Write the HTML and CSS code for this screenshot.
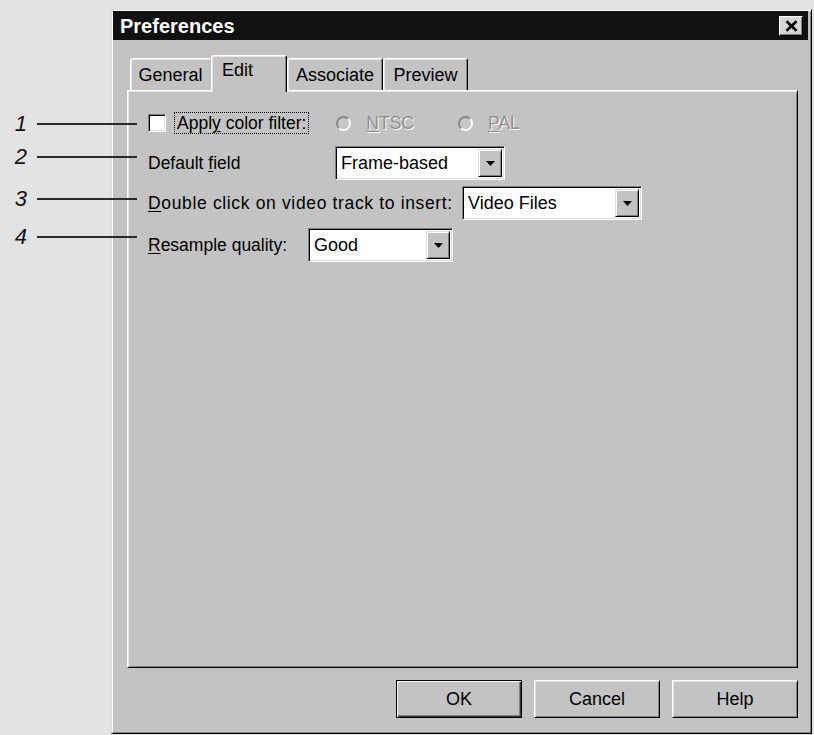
FILE: index.html
```html
<!DOCTYPE html>
<html>
<head>
<meta charset="utf-8">
<title>Preferences</title>
<link rel="stylesheet" href="styles.css">
</head>
<body>
<div class="dialog">
  <div class="titlebar">
    <span class="title">Preferences</span>
    <span class="close"><svg width="13" height="12" viewBox="0 0 13 12"><path d="M1.5 1.2 L11.5 10.8 M11.5 1.2 L1.5 10.8" stroke="#000" stroke-width="2.6" fill="none"/></svg></span>
  </div>
  <div class="body">
    <div class="tabs">
      <div class="tab t-general">General</div>
      <div class="tab t-edit active">Edit</div>
      <div class="tab t-assoc">Associate</div>
      <div class="tab t-preview">Preview</div>
    </div>
    <div class="panel">
      <div class="row r1">
        <span class="checkbox"></span>
        <span class="focus">Appl<u>y</u> color filter:</span>
        <span class="radio r-ntsc"></span><span class="disabled"><u>N</u>TSC</span>
        <span class="radio r-pal"></span><span class="disabled"><u>P</u>AL</span>
      </div>
      <div class="row r2">
        <span class="label l2">Default <u>f</u>ield</span>
        <div class="combo c2"><span class="combo-text">Frame-based</span><span class="combo-btn"><svg width="9" height="5" viewBox="0 0 9 5"><path d="M0 0 H9 L4.5 5 Z" fill="#000"/></svg></span></div>
      </div>
      <div class="row r3">
        <span class="label l3"><u>D</u>ouble click on video track to insert:</span>
        <div class="combo c3"><span class="combo-text">Video Files</span><span class="combo-btn"><svg width="9" height="5" viewBox="0 0 9 5"><path d="M0 0 H9 L4.5 5 Z" fill="#000"/></svg></span></div>
      </div>
      <div class="row r4">
        <span class="label l4"><u>R</u>esample quality:</span>
        <div class="combo c4"><span class="combo-text">Good</span><span class="combo-btn"><svg width="9" height="5" viewBox="0 0 9 5"><path d="M0 0 H9 L4.5 5 Z" fill="#000"/></svg></span></div>
      </div>
    </div>
    <div class="buttons">
      <div class="btn default">OK</div>
      <div class="btn">Cancel</div>
      <div class="btn">Help</div>
    </div>
  </div>
</div>
<div class="callout k1"><span class="num">1</span><span class="line"></span></div>
<div class="callout k2"><span class="num">2</span><span class="line"></span></div>
<div class="callout k3"><span class="num">3</span><span class="line"></span></div>
<div class="callout k4"><span class="num">4</span><span class="line"></span></div>
</body>
</html>
```
FILE: styles.css
```css
* { box-sizing: border-box; }
html, body { margin: 0; padding: 0; }
body {
  width: 814px;
  height: 735px;
  overflow: hidden;
  position: relative;
  background: #e3e3e3;
  font-family: "Liberation Sans", Arial, sans-serif;
  color: #000;
  padding: 9px 0 0 111px;
}
.dialog {
  width: 701px;
  height: 725px;
  background: #c3c3c3;
  border: 1px solid;
  border-color: #dcdcdc #000 #000 #dcdcdc;
  box-shadow: inset 1px 1px 0 #fff, inset -1px -1px 0 #808080;
  padding: 1px;
  display: flex;
  flex-direction: column;
}
.titlebar {
  height: 29px;
  margin-right: 2px;
  background: #111;
  display: flex;
  align-items: center;
  justify-content: space-between;
  padding: 0 5px 0 7px;
}
.title {
  color: #fff;
  font-weight: bold;
  font-size: 20px;
  line-height: 24px;
}
.close {
  width: 24px;
  height: 20px;
  background: #d6d6d6;
  border: 1px solid;
  border-color: #fff #000 #000 #fff;
  box-shadow: inset -1px -1px 0 #808080;
  display: flex;
  align-items: center;
  justify-content: center;
}
.body {
  flex: 1;
  padding: 15px 12px 0 14px;
  display: flex;
  flex-direction: column;
}
.tabs {
  display: flex;
  align-items: flex-end;
  height: 37px;
  padding-left: 3px;
  margin-bottom: -2px;
  position: relative;
  z-index: 1;
}
.tab {
  height: 32px;
  margin-bottom: 2px;
  background: #c3c3c3;
  border: 1px solid;
  border-bottom: none;
  border-color: #fff #000 transparent #fff;
  border-radius: 3px 3px 0 0;
  box-shadow: inset 1px 1px 0 #e6e6e6, inset -1px 0 0 #808080;
  font-size: 18px;
  line-height: 20px;
  padding-top: 6px;
  text-align: center;
  white-space: nowrap;
}
.t-general { width: 81px; border-right-color: transparent; box-shadow: inset 1px 1px 0 #e6e6e6; }
.t-edit { width: 76px; }
.t-assoc { width: 96px; }
.t-preview { width: 85px; }
.tab.active {
  height: 37px;
  margin-bottom: 0;
  padding-top: 4px;
  text-align: left;
  padding-left: 10px;
}
.panel {
  height: 578px;
  border: 1px solid;
  border-color: #fff #000 #000 #fff;
  box-shadow: inset 1px 1px 0 #e6e6e6, inset -1px -1px 0 #808080;
  padding: 21px 0 0 20px;
  font-size: 17.5px;
}
.row {
  display: flex;
  align-items: center;
  white-space: nowrap;
}
.r1 { height: 22px; }
.r2 { margin-top: 12px; }
.r3 { margin-top: 6px; }
.r4 { margin-top: 8px; }
u { text-decoration: underline; text-decoration-thickness: 1px; text-underline-offset: 2px; }
.checkbox {
  width: 18px;
  height: 18px;
  background: #fff;
  border: 1px solid;
  border-color: #808080 #fff #fff #808080;
  box-shadow: inset 1px 1px 0 #000, inset -1px -1px 0 #dfdfdf;
}
.focus {
  margin-left: 8px;
  height: 22px;
  line-height: 20px;
  border: 1px dotted #000;
  padding: 0 2px;
}
.radio {
  width: 15px;
  height: 15px;
  border-radius: 50%;
  border: 2px solid;
  border-color: #8a8a8a #fafafa #fafafa #8a8a8a;
  background: #c8c8c8;
}
.r-ntsc { margin-left: 27px; }
.r-pal { margin-left: 44px; }
.disabled {
  margin-left: 15px;
  color: #8e8e8e;
  text-shadow: 1px 1px 0 #fff;
}
.label { display: inline-block; }
.l2 { width: 187px; }
.l3 { width: 314px; letter-spacing: 0.65px; }
.l4 { width: 160px; }
.combo {
  height: 34px;
  display: flex;
  align-items: center;
  background: #fff;
  border: 1px solid;
  border-color: #808080 #fff #fff #808080;
  box-shadow: inset 1px 1px 0 #000, inset -1px -1px 0 #dfdfdf;
  padding: 2px;
  font-size: 18px;
}
.c2 { width: 170px; }
.c3 { width: 180px; }
.c4 { width: 145px; }
.combo-text {
  flex: 1;
  padding-left: 3px;
  line-height: 28px;
}
.combo-btn {
  width: 24px;
  height: 28px;
  background: #c3c3c3;
  border: 1px solid;
  border-color: #dfdfdf #000 #000 #dfdfdf;
  box-shadow: inset 1px 1px 0 #fff, inset -1px -1px 0 #808080;
  display: flex;
  align-items: center;
  justify-content: center;
}
.buttons {
  display: flex;
  justify-content: flex-end;
  gap: 12px;
  margin-top: 12px;
}
.btn {
  width: 126px;
  height: 38px;
  background: #c3c3c3;
  border: 1px solid;
  border-color: #fff #000 #000 #fff;
  box-shadow: inset 1px 1px 0 #dfdfdf, inset -1px -1px 0 #808080;
  font-size: 18px;
  display: flex;
  align-items: center;
  justify-content: center;
}
.btn.default {
  border-color: #000;
  box-shadow: inset 1px 1px 0 #fff, inset -1px -1px 0 #333, inset -2px -2px 0 #808080;
}
.callout {
  position: absolute;
  left: 8px;
  height: 24px;
  display: flex;
  align-items: center;
}
.num {
  width: 29px;
  padding-right: 10px;
  text-align: right;
  font-style: italic;
  font-size: 22px;
  line-height: 24px;
  color: #111;
}
.line {
  width: 100px;
  height: 2px;
  background: #2a2a2a;
}
.k1 { top: 112px; }
.k2 { top: 145px; }
.k3 { top: 187px; }
.k4 { top: 225px; }
```
